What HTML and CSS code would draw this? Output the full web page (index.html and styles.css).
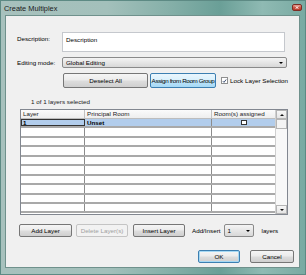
FILE: index.html
```html
<!DOCTYPE html>
<html>
<head>
    <title>Create Multiplex</title>
    <link rel="stylesheet" href="styles.css">
</head>
<body>
<div class="window">
    <div class="titlebar">
        <span class="title">Create Multiplex</span>
        <span class="close-btn"><svg width="4" height="3" viewBox="0 0 4 3"><path d="M0.5 0.3 L3.5 2.7 M3.5 0.3 L0.5 2.7" stroke="#fff" stroke-width="0.9"/></svg></span>
    </div>

    <div class="panel">
        <div class="field-row desc-row">
            <span class="label top-label">Description:</span>
            <div class="textbox">Description</div>
        </div>

        <div class="field-row mode-row">
            <span class="label">Editing mode:</span>
            <div class="combo wide-combo"><span>Global Editing</span><span class="arrow"></span></div>
        </div>

        <div class="action-row">
            <button class="btn deselect-btn">Deselect All</button>
            <button class="btn btn-hover assign-btn">Assign from Room Group</button>
            <span class="check checked"><svg width="6" height="6" viewBox="0 0 6 6"><path d="M1 3.2 L2.4 4.6 L5 1.2" stroke="#2a3f66" stroke-width="1.1" fill="none"/></svg></span>
            <span class="check-label">Lock Layer Selection</span>
        </div>

        <div class="count">1 of 1 layers selected</div>

        <div class="table">
            <div class="cells">
                <div class="row head">
                    <div class="cell">Layer</div>
                    <div class="cell">Principal Room</div>
                    <div class="cell">Room(s) assigned</div>
                </div>
                <div class="row selected">
                    <div class="cell focus">1</div>
                    <div class="cell">Unset</div>
                    <div class="cell center"><span class="mini-box"></span></div>
                </div>
                <div class="row"><div class="cell"></div><div class="cell"></div><div class="cell"></div></div>
                <div class="row"><div class="cell"></div><div class="cell"></div><div class="cell"></div></div>
                <div class="row"><div class="cell"></div><div class="cell"></div><div class="cell"></div></div>
                <div class="row"><div class="cell"></div><div class="cell"></div><div class="cell"></div></div>
                <div class="row"><div class="cell"></div><div class="cell"></div><div class="cell"></div></div>
                <div class="row"><div class="cell"></div><div class="cell"></div><div class="cell"></div></div>
                <div class="row"><div class="cell"></div><div class="cell"></div><div class="cell"></div></div>
                <div class="row"><div class="cell"></div><div class="cell"></div><div class="cell"></div></div>
                <div class="row"><div class="cell"></div><div class="cell"></div><div class="cell"></div></div>
            </div>
            <div class="scrollbar">
                <div class="sb-btn"><span class="tri up"></span></div>
                <div class="sb-thumb"></div>
                <div class="sb-track"></div>
                <div class="sb-btn"><span class="tri down"></span></div>
            </div>
        </div>

        <div class="layer-row">
            <button class="btn add-btn">Add Layer</button>
            <button class="btn disabled del-btn">Delete Layer(s)</button>
            <button class="btn ins-btn">Insert Layer</button>
            <span class="small-label">Add/Insert</span>
            <div class="combo num-combo"><span>1</span><span class="arrow"></span></div>
            <span class="small-label layers">layers</span>
        </div>

        <div class="dialog-row">
            <button class="btn btn-focus ok-btn">OK</button>
            <button class="btn cancel-btn">Cancel</button>
        </div>
    </div>
</div>
</body>
</html>
```

FILE: styles.css
```css
body{margin:0;background:#fff;width:306px;height:275px;overflow:hidden;
    font-family:"Liberation Sans", Arial, sans-serif;}

.window{width:306px;height:275px;display:flex;flex-direction:column;box-sizing:border-box;
    border:1px solid #5d8a84;
    background:linear-gradient(to right,#a7c1bd 0%,#a3c0bb 35%,#86b0a9 55%,#6a9f97 72%,#8fbab3 86%,#79aaa2 100%);}

.titlebar{height:14px;display:flex;align-items:center;justify-content:space-between;padding:0 3px 0 3px;}
.title{font-size:7.4px;color:#1a1a1a;}
.close-btn{width:10px;height:7px;margin-top:-1px;border-radius:2px;border:1px solid #7d2d25;box-sizing:border-box;
    background:linear-gradient(#e9a093,#c8503f 55%,#b83a2a);display:flex;align-items:center;justify-content:center;}

.panel{flex:1;margin:0 5px 6px 4px;background:#f0f0f0;border:1px solid #6f918c;
    padding:16px 0 0 0;display:flex;flex-direction:column;font-size:6.25px;color:#000;}

.field-row{display:flex;align-items:center;}
.desc-row{align-items:flex-start;}
.label{width:45px;padding-left:11px;}
.top-label{padding-top:3px;}
.textbox{width:223px;height:20px;box-sizing:border-box;background:#fff;border:1px solid #c5c8cd;
    padding:3px 3px;}

.mode-row{margin-top:5px;}
.combo{height:11px;box-sizing:border-box;border:1px solid #8a8a8a;border-radius:2px;
    background:linear-gradient(#f4f4f4,#e6e6e6 50%,#d8d8d8);display:flex;align-items:center;
    justify-content:space-between;padding:0 3px;}
.wide-combo{width:225px;}
.arrow{width:0;height:0;border-left:2px solid transparent;border-right:2px solid transparent;border-top:2px solid #000;}

.action-row{display:flex;align-items:center;margin-top:5px;padding-left:57px;}
.btn{font-family:"Liberation Sans", Arial, sans-serif;font-size:6.25px;color:#000;padding:0;
    box-sizing:border-box;border:1px solid #767676;border-radius:2px;
    background:linear-gradient(#f5f5f5,#ebebeb 48%,#dddddd 52%,#cfcfcf);}
.deselect-btn{width:85px;height:15px;}
.assign-btn{width:66px;height:15px;margin-left:2px;letter-spacing:-0.35px;white-space:nowrap;}
.btn-hover{border-color:#3c7fb1;background:linear-gradient(#eaf6fd,#d9f0fc 48%,#bee6fd 52%,#a7d9f5);}
.check{width:7px;height:7px;box-sizing:border-box;margin-left:5px;border:1px solid #8e8f8f;
    background:#fff;display:flex;align-items:center;justify-content:center;}
.check-label{margin-left:2px;}

.count{margin-top:10px;padding-left:25px;height:8px;line-height:8px;color:#222;}

.table{margin:3px 0 0 14px;width:268px;height:106px;box-sizing:border-box;border:1px solid #828790;
    background:#fff;display:flex;overflow:hidden;}
.cells{width:255px;overflow:hidden;}
.row{display:grid;grid-template-columns:64px 127px 64px;height:9.45px;box-sizing:border-box;
    border-bottom:2px solid #a9a9a9;}
.cell{border-right:1px solid #8c8c8c;padding-left:2px;line-height:7.4px;overflow:hidden;white-space:nowrap;}
.head{height:9px;border-bottom:1px solid #bdbdbd;background:linear-gradient(#fbfbfb,#eeeeee);}
.head .cell{border-right-color:#c2c2c2;line-height:8px;color:#222;}
.selected{background:#b2cdec;}
.selected .cell{font-weight:bold;}
.focus{outline:1px solid #333;outline-offset:-1px;}
.center{display:flex;align-items:center;justify-content:center;padding:0;}
.mini-box{width:6px;height:5px;box-sizing:border-box;border:1px solid #333;background:#fff;}

.scrollbar{width:11px;display:flex;flex-direction:column;background:#f2f2f2;border-left:1px solid #d0d0d0;}
.sb-btn{height:9px;box-sizing:border-box;border:1px solid #b5b5b5;background:linear-gradient(#f7f7f7,#e4e4e4);
    display:flex;align-items:center;justify-content:center;}
.sb-thumb{height:10px;box-sizing:border-box;border:1px solid #b5b5b5;background:#f4f4f4;}
.sb-track{flex:1;background:#f8f8f8;}
.tri{width:0;height:0;border-left:2px solid transparent;border-right:2px solid transparent;}
.tri.up{border-bottom:2px solid #111;}
.tri.down{border-top:2px solid #111;}

.layer-row{display:flex;align-items:center;margin-top:9px;padding-left:13px;}
.add-btn{width:53px;height:13px;}
.del-btn{width:52px;height:13px;margin-left:4px;}
.ins-btn{width:52px;height:13px;margin-left:5px;}
.disabled{color:#a0a0a0;border-color:#c4c4c4;background:#f2f2f2;}
.small-label{margin-left:7px;}
.num-combo{width:30px;height:13px;margin-left:3px;}
.layers{margin-left:8px;}

.dialog-row{display:flex;justify-content:flex-end;margin-top:13px;padding-right:5px;gap:10px;}
.ok-btn{width:42px;height:13px;}
.cancel-btn{width:44px;height:13px;}
.btn-focus{border-color:#3c7fb1;box-shadow:inset 0 0 0 1px #a6d8f3;}
```
